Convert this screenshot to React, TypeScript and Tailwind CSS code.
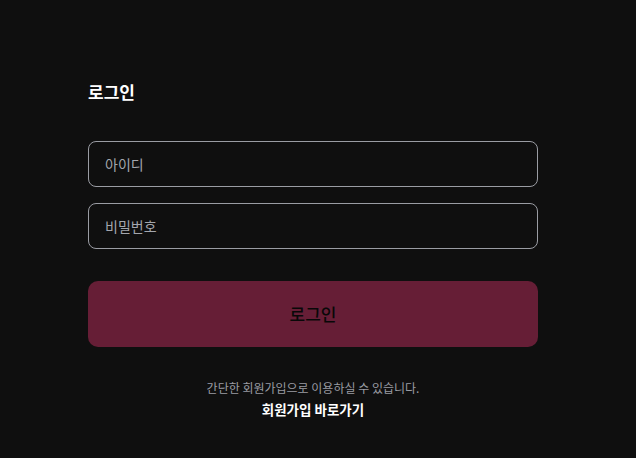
import React from "react";

export default function App() {
  return (
    <div
      className="min-h-[458px] w-full bg-[#0f0f0f] pt-[80px]"
      style={{ fontFamily: '"Noto Sans CJK KR", "Noto Sans", sans-serif' }}
    >
      <div className="ml-[88px] w-[450px]">
        <h1 className="text-[17px] font-bold leading-[24px] text-white">로그인</h1>

        <div className="mt-[37px] flex flex-col gap-4">
          <input
            type="text"
            placeholder="아이디"
            className="h-[46px] w-full rounded-lg border border-[#9a9ca3] bg-transparent px-4 text-[14px] text-white outline-none placeholder:text-[#a3a6ad]"
          />
          <input
            type="password"
            placeholder="비밀번호"
            className="h-[46px] w-full rounded-lg border border-[#9a9ca3] bg-transparent px-4 text-[14px] text-white outline-none placeholder:text-[#a3a6ad]"
          />
        </div>

        <button className="mt-8 h-[66px] w-full rounded-[10px] bg-[#661e36] text-[17px] font-medium text-[#080808]">
          로그인
        </button>

        <div className="mt-[32px] flex flex-col items-center">
          <p className="text-[12px] leading-[18px] text-[#9a9ca3]">
            간단한 회원가입으로 이용하실 수 있습니다.
          </p>
          <a className="mt-[2px] text-[13.5px] font-bold leading-[20px] text-white">
            회원가입 바로가기
          </a>
        </div>
      </div>
    </div>
  );
}
